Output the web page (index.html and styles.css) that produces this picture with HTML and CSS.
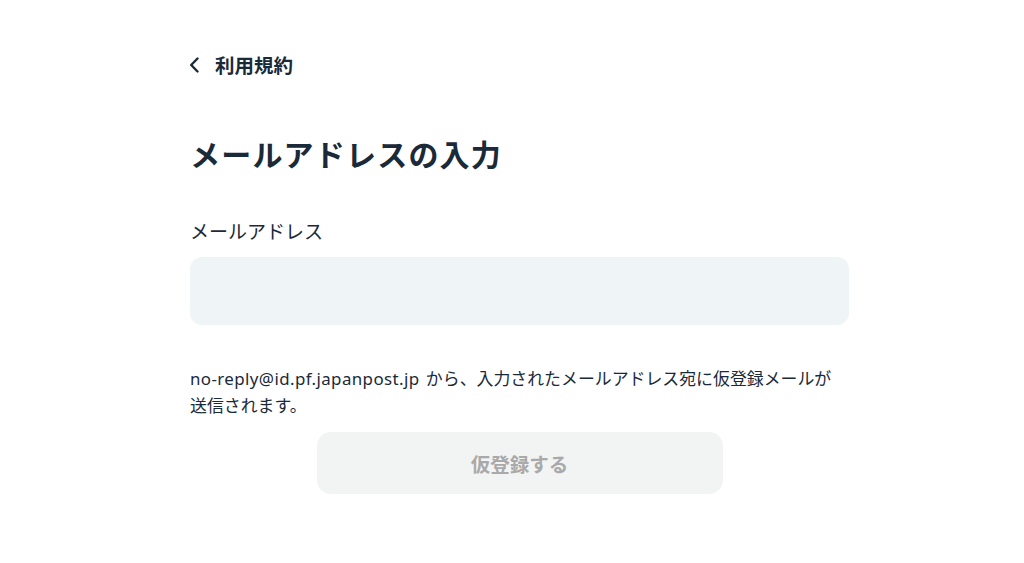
FILE: index.html
```html
<!DOCTYPE html>
<html lang="ja">
<head>
    <meta charset="UTF-8">
    <meta name="viewport" content="width=device-width, initial-scale=1.0">
    <title>メールアドレスの入力</title>
    <link rel="stylesheet" href="styles.css">
</head>
<body>
    <div class="page">
        <a class="back-link" href="#">
            <svg class="back-icon" width="12" height="16" viewBox="0 0 12 16">
                <path d="M8.5 1.5 L2.2 8 L8.5 14.5" fill="none" stroke="currentColor" stroke-width="2.4" stroke-linecap="round" stroke-linejoin="round"/>
            </svg>
            <span>利用規約</span>
        </a>

        <h1 class="title">メールアドレスの入力</h1>

        <label class="field-label" for="email">メールアドレス</label>
        <input class="field-input" id="email" type="email">

        <p class="note"><span class="sender">no-reply@id.pf.japanpost.jp</span> から、入力されたメールアドレス宛に仮登録メールが<br>送信されます。</p>

        <div class="actions">
            <button class="submit-button" disabled>仮登録する</button>
        </div>
    </div>
</body>
</html>
```

FILE: styles.css
```css
body {
    margin: 0;
    background-color: #ffffff;
    color: #1a2a39;
    font-family: "Noto Sans CJK JP", "Noto Sans", sans-serif;
}

.page {
    width: 659px;
    margin-left: 190px;
    padding-top: 51px;
}

.back-link {
    display: flex;
    align-items: center;
    gap: 14px;
    color: #1a2a39;
    text-decoration: none;
    font-size: 19.5px;
    font-weight: bold;
    line-height: 27px;
}

.back-icon {
    margin-left: -1px;
}

.title {
    margin: 55px 0 0;
    font-size: 30px;
    line-height: 40px;
    font-weight: bold;
    letter-spacing: 1.2px;
}

.field-label {
    display: block;
    margin-top: 45px;
    font-size: 19px;
    line-height: 26px;
}

.field-input {
    display: block;
    box-sizing: border-box;
    width: 100%;
    height: 68px;
    margin-top: 13px;
    border: none;
    border-radius: 12px;
    background-color: #eff4f7;
    outline: none;
}

.note {
    margin: 40px 0 0;
    font-family: "Noto Sans", "Noto Sans CJK JP", sans-serif;
    font-size: 16.9px;
    line-height: 27px;
}

.note .sender {
    letter-spacing: 0.4px;
    margin-right: 2px;
}

.actions {
    display: flex;
    justify-content: center;
    margin-top: 13px;
}

.submit-button {
    width: 406px;
    height: 62px;
    border: none;
    border-radius: 14px;
    background-color: #f2f3f3;
    color: #a9a9a9;
    font-family: inherit;
    font-size: 19.5px;
    font-weight: bold;
}
```
